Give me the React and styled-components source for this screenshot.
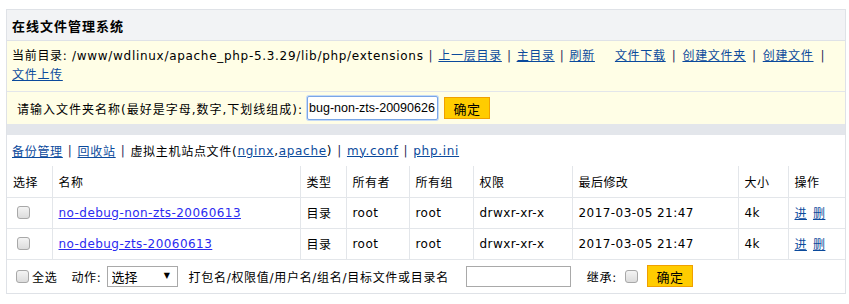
import styled, { createGlobalStyle } from "styled-components";

const GlobalStyle = createGlobalStyle`
  body {
    margin: 0;
    background: #ffffff;
    font-family: "DejaVu Sans", "Noto Sans CJK SC", sans-serif;
    font-size: 12px;
    letter-spacing: 0.7px;
    color: #000000;
  }
`;

const Panel = styled.div`
  border: 1px solid #dfe2e7;
  margin: 9px 0 0 6px;
  width: 838px;
`;

const Title = styled.h1`
  align-items: center;
  background-color: #f2f3f5;
  border-bottom: 1px solid #dfe2e7;
  display: flex;
  font-family: "Noto Sans CJK SC", sans-serif;
  font-size: 13px;
  font-weight: bold;
  height: 30px;
  letter-spacing: 1px;
  margin: 0;
  padding-left: 5px;
`;

const PathBar = styled.div`
  background-color: #fffee6;
  border-bottom: 1px solid #e3e6ea;
  line-height: 19px;
  padding: 6px 5px;
`;

const Link = styled.a`
  color: ${({ $tone }) => ($tone === "bright" ? "#2b2bf0" : "#0b4a9c")};
  cursor: pointer;
  text-decoration: underline;
`;

const Sep = styled.span`
  color: #2d2d5a;
  margin: 0 ${({ $m }) => $m ?? 5}px;
`;

const Gap = styled.span`
  display: inline-block;
  width: 20px;
`;

const MkdirBar = styled.div`
  align-items: center;
  background-color: #fffee6;
  display: flex;
  height: 32px;
  padding-left: 10px;
`;

const Label = styled.span`
  letter-spacing: 1px;
  margin-right: 4px;
`;

const NameInput = styled.input`
  border: 1px solid #7aa6e6;
  border-radius: 2px;
  box-shadow: 0 0 0 1px #c5daf6;
  box-sizing: border-box;
  font-family: "Liberation Sans", Arial, sans-serif;
  font-size: 12.5px;
  height: 24px;
  letter-spacing: 0;
  outline: none;
  padding: 0 1px;
  width: 131px;
`;

const Button = styled.button`
  background-color: #ffcc00;
  border: 1px solid #f0a000;
  box-sizing: border-box;
  color: #000;
  cursor: pointer;
  font-family: "Noto Sans CJK SC", sans-serif;
  font-size: 13px;
  height: 22px;
  letter-spacing: 0.5px;
  margin-left: ${({ $gap }) => $gap || 6}px;
  padding: 0;
  width: 46px;
`;

const Divider = styled.div`
  background-color: #e3e6eb;
  height: 11px;
`;

const LinkBar = styled.div`
  align-items: center;
  display: flex;
  height: 31px;
  padding-left: 5px;
`;

const Table = styled.table`
  border-collapse: collapse;
  border-style: hidden;
  letter-spacing: 0.45px;
  table-layout: fixed;
  width: 838px;

  td,
  th {
    border: 1px solid #e3e6ea;
    font-weight: normal;
    overflow: hidden;
    padding: 0 0 0 6px;
    text-align: left;
    white-space: nowrap;
  }
`;

const Row = styled.tr`
  height: ${({ $h }) => $h || 31}px;
`;

const Check = styled.input.attrs({ type: "checkbox" })`
  appearance: none;
  background: linear-gradient(#f4f4f4, #dcdcdc);
  border: 1px solid #a8a8a8;
  border-radius: 3px;
  height: 13px;
  margin: 0 ${({ $mr }) => $mr ?? 0}px 0 ${({ $ml }) => $ml ?? 4}px;
  vertical-align: -2px;
  width: 13px;
`;

const Ops = styled.span`
  display: inline-flex;
  gap: 6px;
`;

const Footer = styled.div`
  align-items: center;
  display: flex;
  letter-spacing: 0.7px;
`;

const SelectAll = styled.span`
  margin-right: 14px;
`;

const SelectWrap = styled.span`
  display: inline-block;
  margin: 0 11px 0 5px;
  position: relative;
`;

const Select = styled.select`
  appearance: none;
  background: #fff;
  border: 1px solid #a9a9a9;
  box-sizing: border-box;
  color: #000;
  font-family: "Noto Sans CJK SC", sans-serif;
  font-size: 13px;
  height: 21px;
  padding: 0 0 0 4px;
  width: 71px;
`;

const Arrow = styled.span`
  font-size: 8px;
  pointer-events: none;
  position: absolute;
  right: 7px;
  top: 5px;
`;

const TargetInput = styled.input`
  border: 1px solid #a9a9a9;
  box-sizing: border-box;
  height: 21px;
  margin: 0 16px 0 17px;
  width: 105px;
`;

const files = [
  { name: "no-debug-non-zts-20060613" },
  { name: "no-debug-zts-20060613" },
];

const App = () => (
  <>
    <GlobalStyle />
    <Panel>
      <Title>在线文件管理系统</Title>

      <PathBar>
        当前目录: /www/wdlinux/apache_php-5.3.29/lib/php/extensions
        <Sep>|</Sep>
        <Link>上一层目录</Link>
        <Sep>|</Sep>
        <Link>主目录</Link>
        <Sep>|</Sep>
        <Link>刷新</Link>
        <Gap />
        <Link>文件下载</Link>
        <Sep $m={6}>|</Sep>
        <Link>创建文件夹</Link>
        <Sep $m={6}>|</Sep>
        <Link>创建文件</Link>
        <Sep $m={7}>|</Sep>
        <br />
        <Link>文件上传</Link>
      </PathBar>

      <MkdirBar>
        <Label>请输入文件夹名称(最好是字母,数字,下划线组成):</Label>
        <NameInput defaultValue="bug-non-zts-20090626" />
        <Button>确定</Button>
      </MkdirBar>

      <Divider />

      <LinkBar>
        <Link>备份管理</Link>
        <Sep>|</Sep>
        <Link>回收站</Link>
        <Sep>|</Sep>
        虚拟主机站点文件(<Link>nginx</Link>,<Link>apache</Link>)
        <Sep>|</Sep>
        <Link>my.conf</Link>
        <Sep>|</Sep>
        <Link>php.ini</Link>
      </LinkBar>

      <Table>
        <colgroup>
          <col style={{ width: 45 }} />
          <col style={{ width: 248 }} />
          <col style={{ width: 46 }} />
          <col style={{ width: 63 }} />
          <col style={{ width: 64 }} />
          <col style={{ width: 99 }} />
          <col style={{ width: 166 }} />
          <col style={{ width: 50 }} />
          <col style={{ width: 57 }} />
        </colgroup>
        <thead>
          <Row>
            <th>选择</th>
            <th>名称</th>
            <th>类型</th>
            <th>所有者</th>
            <th>所有组</th>
            <th>权限</th>
            <th>最后修改</th>
            <th>大小</th>
            <th>操作</th>
          </Row>
        </thead>
        <tbody>
          {files.map((f) => (
            <Row key={f.name}>
              <td>
                <Check />
              </td>
              <td>
                <Link $tone="bright">{f.name}</Link>
              </td>
              <td>目录</td>
              <td>root</td>
              <td>root</td>
              <td>drwxr-xr-x</td>
              <td>2017-03-05 21:47</td>
              <td>4k</td>
              <td>
                <Ops>
                  <Link>进</Link>
                  <Link>删</Link>
                </Ops>
              </td>
            </Row>
          ))}
          <Row $h={34}>
            <td colSpan={9}>
              <Footer>
                <Check $ml={3} $mr={3} />
                <SelectAll>全选</SelectAll>
                动作:
                <SelectWrap>
                  <Select defaultValue="select">
                    <option value="select">选择</option>
                  </Select>
                  <Arrow>▼</Arrow>
                </SelectWrap>
                打包名/权限值/用户名/组名/目标文件或目录名
                <TargetInput />
                继承:
                <Check $ml={8} />
                <Button $gap={9}>确定</Button>
              </Footer>
            </td>
          </Row>
        </tbody>
      </Table>
    </Panel>
  </>
);

export default App;
